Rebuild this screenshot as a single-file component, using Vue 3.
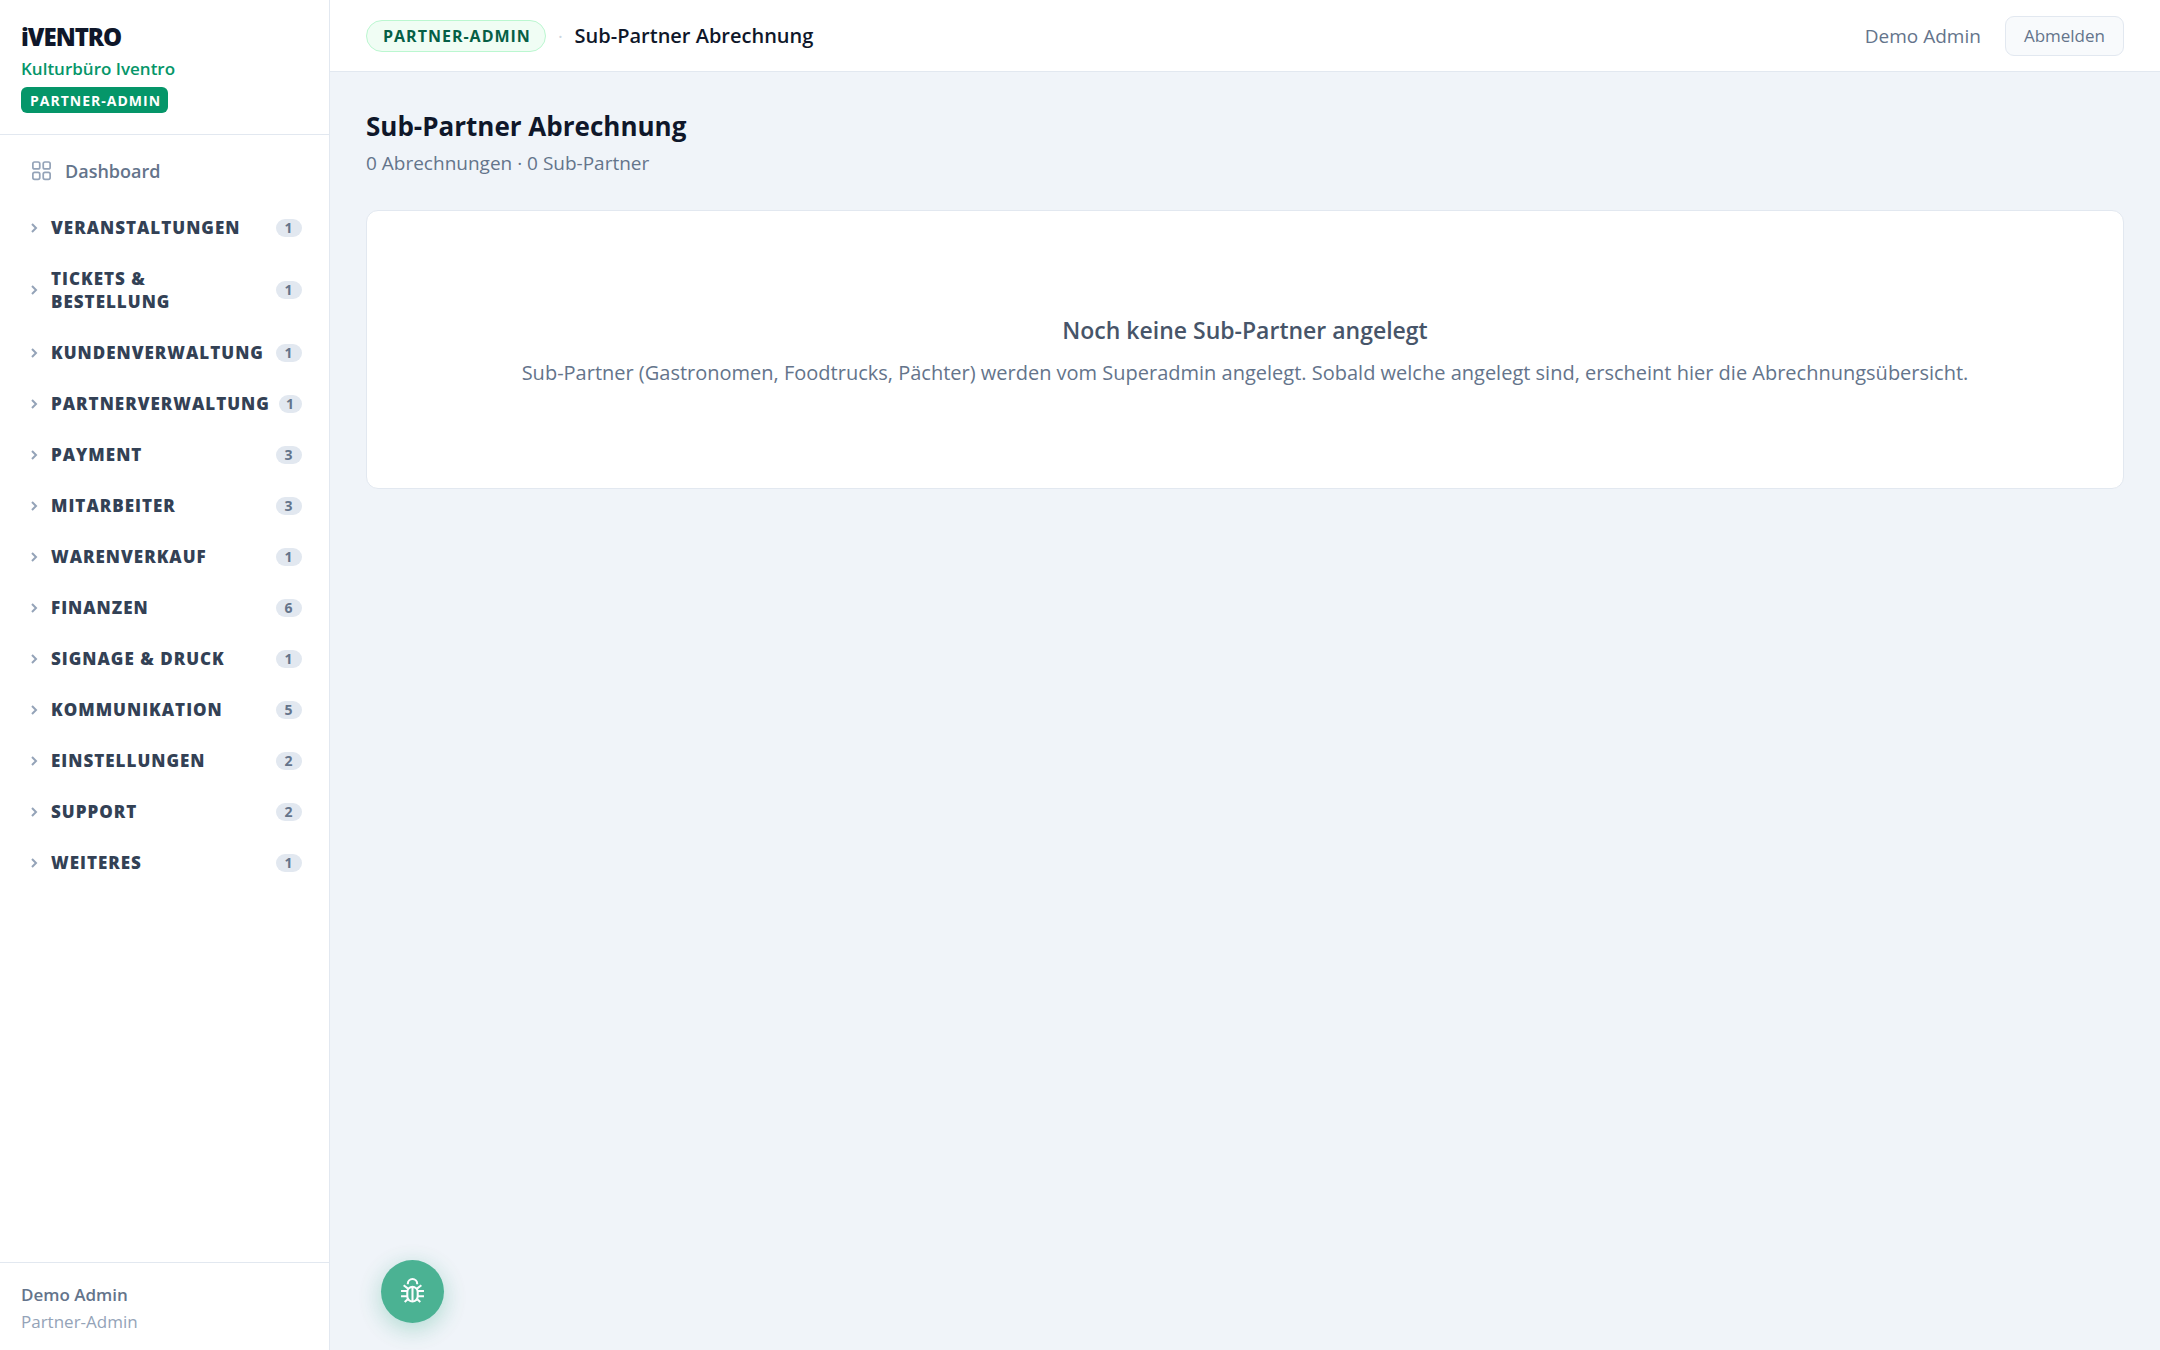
<!-- Partner-Admin: Sub-Partner Abrechnung -->
<template>
  <div class="layout">
    <aside class="sidebar">
      <div class="brand">
        <div class="brand-name">iVENTRO</div>
        <div class="brand-tenant">Kulturbüro Iventro</div>
        <span class="brand-role">PARTNER-ADMIN</span>
      </div>

      <nav class="nav">
        <a href="#" class="nav-link">
          <svg class="nav-icon" viewBox="1 2 22 22" aria-hidden="true">
            <rect x="2" y="2" width="8" height="8" rx="2" />
            <rect x="14" y="2" width="8" height="8" rx="2" />
            <rect x="2" y="14" width="8" height="8" rx="2" />
            <rect x="14" y="14" width="8" height="8" rx="2" />
          </svg>
          Dashboard
        </a>

        <button
          v-for="group in groups"
          :key="group.label"
          type="button"
          class="nav-group"
          :aria-expanded="openGroup === group.label"
          @click="toggle(group.label)"
        >
          <svg class="chevron" viewBox="0 0 8 12" aria-hidden="true">
            <path d="M2 2l4 4-4 4" />
          </svg>
          <span class="nav-group-label">{{ group.label }}</span>
          <span class="nav-count">{{ group.count }}</span>
        </button>
      </nav>

      <div class="sidebar-footer">
        <div class="user-name">{{ user.name }}</div>
        <div class="user-role">{{ user.role }}</div>
      </div>
    </aside>

    <div class="main">
      <header class="topbar">
        <span class="role-pill">PARTNER-ADMIN</span>
        <span class="separator">·</span>
        <span class="topbar-title">Sub-Partner Abrechnung</span>
        <span class="topbar-user">{{ user.name }}</span>
        <button type="button" class="logout">Abmelden</button>
      </header>

      <main class="content">
        <h1>Sub-Partner Abrechnung</h1>
        <p class="summary">{{ settlements.length }} Abrechnungen · {{ subPartners.length }} Sub-Partner</p>

        <section v-if="!subPartners.length" class="card">
          <h2>Noch keine Sub-Partner angelegt</h2>
          <p>
            Sub-Partner (Gastronomen, Foodtrucks, Pächter) werden vom Superadmin angelegt.
            Sobald welche angelegt sind, erscheint hier die Abrechnungsübersicht.
          </p>
        </section>
      </main>
    </div>

    <button type="button" class="bug-button" aria-label="Fehler melden">
      <svg viewBox="0 0 24 24" aria-hidden="true">
        <path d="M7.5 6V5.500a4.500 4.500 0 0 1 9 0V6" />
        <rect x="7" y="8.500" width="10" height="14" rx="5" />
        <path d="M12 9v13" />
        <path d="M7 12.500H1M7 17.500H1M17 12.500H23M17 17.500H23" />
        <path d="M8 10.500L3.500 7M16 10.500L20.500 7M8 20L4.500 23M16 20L19.500 23" />
      </svg>
    </button>
  </div>
</template>

<script setup>
import { ref } from 'vue';

const user = { name: 'Demo Admin', role: 'Partner-Admin' };

const groups = [
  { label: 'VERANSTALTUNGEN', count: 1 },
  { label: 'TICKETS & BESTELLUNG', count: 1 },
  { label: 'KUNDENVERWALTUNG', count: 1 },
  { label: 'PARTNERVERWALTUNG', count: 1 },
  { label: 'PAYMENT', count: 3 },
  { label: 'MITARBEITER', count: 3 },
  { label: 'WARENVERKAUF', count: 1 },
  { label: 'FINANZEN', count: 6 },
  { label: 'SIGNAGE & DRUCK', count: 1 },
  { label: 'KOMMUNIKATION', count: 5 },
  { label: 'EINSTELLUNGEN', count: 2 },
  { label: 'SUPPORT', count: 2 },
  { label: 'WEITERES', count: 1 }
];

const settlements = ref([]);
const subPartners = ref([]);
const openGroup = ref('');

function toggle(label) {
  openGroup.value = openGroup.value === label ? '' : label;
}
</script>

<style>
body {
  margin: 0;
  background: #f0f4f9;
}
</style>

<style scoped>
.layout {
  display: flex;
  min-height: 100vh;
  font-family: 'Open Sans', 'Noto Sans', sans-serif;
  color: #0f172a;
}

.layout button {
  font-family: inherit;
  cursor: pointer;
}

/* Sidebar */
.sidebar {
  box-sizing: border-box;
  display: flex;
  flex-direction: column;
  flex: 0 0 330px;
  width: 330px;
  background: #fff;
  border-right: 1px solid #e2e8f0;
}

.brand {
  padding: 21px;
  border-bottom: 1px solid #e2e8f0;
}

.brand-name {
  font-size: 24px;
  font-weight: 800;
  line-height: 32px;
  letter-spacing: -1px;
}

.brand-tenant {
  font-size: 17px;
  font-weight: 600;
  line-height: 32px;
  color: #059669;
}

.brand-role {
  display: block;
  width: max-content;
  margin-top: 2px;
  padding: 2px 7px 0 9px;
  border-radius: 6px;
  background: #059669;
  color: #fff;
  font-size: 14px;
  font-weight: 700;
  line-height: 24px;
  letter-spacing: 1px;
}

.nav {
  flex: 1;
  padding: 12px 12px;
}

.nav-link {
  display: flex;
  align-items: center;
  gap: 14px;
  margin-bottom: 6px;
  padding: 0 18px 0 20px;
  color: #64748b;
  font-size: 18px;
  font-weight: 600;
  line-height: 49px;
  text-decoration: none;
}

.nav-icon {
  width: 19px;
  height: 19px;
  fill: none;
  stroke: #94a3b8;
  stroke-width: 2;
  overflow: visible;
}

.nav-group {
  display: flex;
  align-items: center;
  width: 100%;
  padding: 14px 15px 14px 18px;
  border: 0;
  background: none;
  color: #334155;
  font-size: 17px;
  font-weight: 800;
  line-height: 23px;
  letter-spacing: 1px;
  text-align: left;
}

.chevron {
  flex: none;
  width: 8px;
  height: 12px;
  margin-right: 13px;
  fill: none;
  stroke: #94a3b8;
  stroke-width: 2;
}

.nav-group-label {
  flex: 1;
}

.nav-count {
  box-sizing: border-box;
  flex: 0 1 26px;
  margin-left: 9px;
  padding: 0 6px;
  border-radius: 9px;
  background: #e2e8f0;
  color: #64748b;
  font-size: 14px;
  font-weight: 700;
  line-height: 18px;
  text-align: center;
}

.sidebar-footer {
  padding: 18px 21px 15px;
  border-top: 1px solid #e2e8f0;
}

.user-name {
  color: #64748b;
  font-size: 17px;
  font-weight: 600;
  line-height: 27px;
}

.user-role {
  color: #94a3b8;
  font-size: 17px;
  line-height: 27px;
}

/* Kopfzeile */
.main {
  flex: 1;
  min-width: 0;
}

.topbar {
  display: flex;
  align-items: center;
  box-sizing: border-box;
  height: 72px;
  padding: 0 36px;
  background: #fff;
  border-bottom: 1px solid #e2e8f0;
}

.role-pill {
  padding: 0 14px 0 16px;
  border: 1px solid #bbf7d0;
  border-radius: 16px;
  background: #f0fdf4;
  color: #065f46;
  font-size: 16px;
  font-weight: 700;
  line-height: 30px;
  letter-spacing: 1px;
}

.separator {
  margin: 0 12px;
  color: #cbd5e1;
  font-size: 18px;
}

.topbar-title {
  flex: 1;
  font-size: 20px;
  font-weight: 600;
}

.topbar-user {
  margin-right: 24px;
  color: #64748b;
  font-size: 19px;
}

.logout {
  padding: 0 18px;
  border: 1px solid #e2e8f0;
  border-radius: 9px;
  background: #f8fafc;
  color: #64748b;
  font-size: 17px;
  line-height: 38px;
}

/* Inhalt */
.content {
  padding: 36px;
}

h1 {
  margin: 0;
  font-size: 26px;
  font-weight: 700;
  line-height: 36px;
}

.summary {
  margin: 6px 0 33px;
  color: #64748b;
  font-size: 19px;
  line-height: 27px;
}

.card {
  padding: 103px 36px 99px;
  border: 1px solid #e2e8f0;
  border-radius: 12px;
  background: #fff;
  text-align: center;
}

.card h2 {
  margin: 0 0 9px;
  color: #475569;
  font-size: 23px;
  font-weight: 600;
  line-height: 33px;
}

.card p {
  margin: 0;
  color: #64748b;
  font-size: 20px;
  line-height: 33px;
}

/* Fehler-Meldebutton */
.bug-button {
  position: fixed;
  left: 381px;
  bottom: 27px;
  display: flex;
  align-items: center;
  justify-content: center;
  width: 63px;
  height: 63px;
  padding: 0 0 2px;
  border: 0;
  border-radius: 50%;
  background: #059669;
  box-shadow: 0 6px 24px rgba(5, 150, 105, 0.4);
  opacity: 0.7;
}

.bug-button svg {
  width: 25px;
  height: 25px;
  fill: none;
  stroke: #fff;
  stroke-width: 2;
}
</style>
